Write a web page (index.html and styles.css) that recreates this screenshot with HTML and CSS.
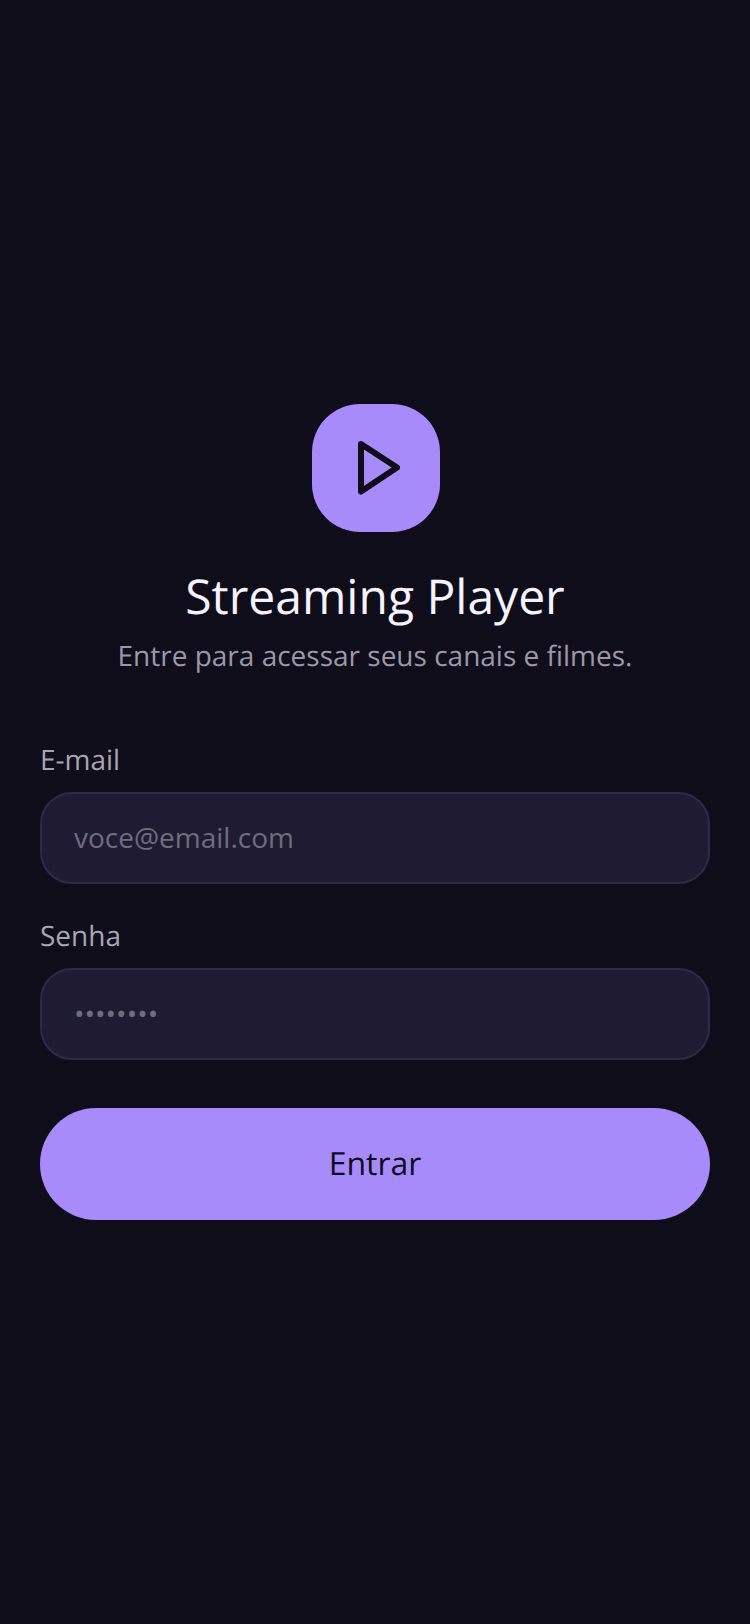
FILE: index.html
```html
<!DOCTYPE html>
<html lang="pt-BR">
<head>
    <meta charset="UTF-8">
    <meta name="viewport" content="width=device-width, initial-scale=1.0">
    <title>Streaming Player</title>
    <link rel="stylesheet" href="styles.css">
</head>
<body>

    <main class="login">
        <div class="logo">
            <svg class="logo-icon" width="42" height="54" viewBox="0 0 42 54" fill="none">
                <path d="M3 3 L39 26.5 L3 50.5 Z" stroke="#0f0d1a" stroke-width="6" stroke-linejoin="round"/>
            </svg>
        </div>
        <h1 class="title">Streaming Player</h1>
        <p class="subtitle">Entre para acessar seus canais e filmes.</p>

        <form class="form">
            <label class="field">
                <span class="field-label">E-mail</span>
                <input class="field-input" type="email" placeholder="voce@email.com">
            </label>
            <label class="field">
                <span class="field-label">Senha</span>
                <input class="field-input" type="text" placeholder="••••••••">
            </label>
            <button class="submit" type="button">Entrar</button>
        </form>
    </main>

</body>
</html>
```

FILE: styles.css
```css
* {
    box-sizing: border-box;
}

body {
    margin: 0;
    height: 100vh;
    display: flex;
    align-items: center;
    background-color: #0f0d1a;
    font-family: "Open Sans", sans-serif;
    text-rendering: geometricPrecision;
}

.login {
    width: 100%;
    padding: 0 40px;
    display: flex;
    flex-direction: column;
    align-items: center;
}

.logo {
    width: 128px;
    height: 128px;
    margin-left: 2px;
    border-radius: 48px;
    background-color: #a78bfa;
    display: flex;
    align-items: center;
    justify-content: center;
}

.logo-icon {
    margin-left: 6px;
}

.title {
    margin: 32px 0 0;
    font-size: 48px;
    font-weight: 400;
    line-height: 66px;
    color: #f5f3ff;
}

.subtitle {
    margin: 7px 0 0;
    font-size: 28px;
    line-height: 38px;
    color: #9a98a8;
}

.form {
    width: 100%;
    margin-top: 65px;
    display: flex;
    flex-direction: column;
}

.field {
    display: block;
    margin-bottom: 32px;
}

.field-label {
    display: block;
    margin-bottom: 13px;
    padding-top: 1px;
    font-size: 28px;
    line-height: 38px;
    color: #a7a5b2;
}

.field-input {
    display: block;
    width: 100%;
    height: 92px;
    padding: 0 32px 2px;
    border: 2px solid #2e2b47;
    border-radius: 32px;
    outline: none;
    background-color: #1e1b32;
    font-family: inherit;
    font-size: 28px;
    color: #ffffff;
}

.field-input::placeholder {
    color: #6f6d7d;
    opacity: 1;
}

.submit {
    height: 112px;
    margin-top: 16px;
    padding: 0 0 1px;
    border: none;
    border-radius: 56px;
    background-color: #a78bfa;
    font-family: inherit;
    font-size: 32px;
    color: #0f0d1a;
    text-rendering: geometricPrecision;
}
```
